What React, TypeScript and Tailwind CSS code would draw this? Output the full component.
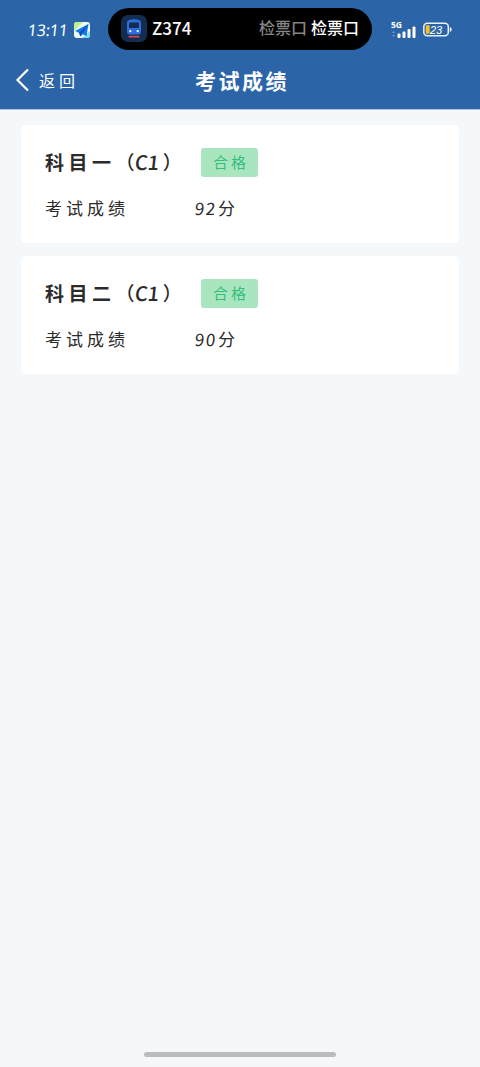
import React from "react";

const results = [
  { subject: "科目一", type: "C1", score: "92", status: "合格" },
  { subject: "科目二", type: "C1", score: "90", status: "合格" },
];

const StatusBar = () => (
  <div className="flex h-[57px] items-center pl-[28px]">
    <div className="w-[46px] -skew-x-6 pt-[2px] font-['Noto_Sans'] text-[16px] leading-5 tracking-[-0.2px]">13:11</div>
    <svg className="mt-[3px] h-4 w-4" viewBox="0 0 16 16">
      <rect width="16" height="16" rx="3" fill="#eef8f4" />
      <path d="M3 0h6L0 9V3a3 3 0 0 1 3-3Z" fill="#bdf08c" />
      <path d="M8 16l8-7v4a3 3 0 0 1-3 3Z" fill="#7fdcf5" />
      <path d="M14.5 2 1 9l4 1.8L6.5 14.5l2-2.2 4 1.7Z" fill="#1478ee" />
      <path d="M14.5 2 5 10.8l1.500 3.700Z" fill="#0755bd" />
    </svg>
    <div className="ml-[18px] flex h-[42px] w-[264px] items-center rounded-full bg-black px-[13px]">
      <svg className="h-[27px] w-[26px]" viewBox="0 0 26 27">
        <rect width="26" height="27" rx="7" fill="#122d4e" />
        <path d="M6 8c0-3 3-3.700 7-3.700s7 .7 7 3.700v9a2.500 2.500 0 0 1-2.500 2.500h-9A2.500 2.500 0 0 1 6 17Z" fill="#2d6de0" />
        <rect x="8" y="7.5" width="10" height="5.5" rx="1" fill="#122d4e" />
        <circle cx="9.3" cy="16.2" r="1.1" fill="#fff" />
        <circle cx="16.7" cy="16.2" r="1.1" fill="#fff" />
        <rect x="7.5" y="20.8" width="11" height="1.6" rx="0.6" fill="#e24550" />
      </svg>
      <span className="ml-[5px] -mt-[2px] text-[17px] font-medium">Z374</span>
      <div className="-mt-[3px] ml-auto flex gap-[4px] text-[16px] font-medium">
        <span className="text-[#858585]">检票口</span>
        <span>检票口</span>
      </div>
    </div>
    <svg className="mt-[1px] ml-[18px] h-5 w-[27px]" viewBox="0 0 27 20">
      <text x="1" y="8.5" fill="#fff" fontSize="8.5" fontWeight="700" fontFamily="Noto Sans">5G</text>
      <path d="M3.500 12l1.600 2H1.900ZM3.500 18l1.600-2H1.900Z" fill="#6d96cb" />
      <rect x="7.5" y="14.5" width="3" height="4.5" rx="1" fill="#fff" />
      <rect x="12.5" y="12.5" width="3" height="6.5" rx="1" fill="#fff" />
      <rect x="17.5" y="10" width="3" height="9" rx="1" fill="#fff" />
      <rect x="22.5" y="7.5" width="3" height="11.5" rx="1" fill="#fff" />
    </svg>
    <svg className="mt-[2px] ml-[6px] h-[15px] w-[30px]" viewBox="0 0 30 15">
      <rect x="0.8" y="1.3" width="24.5" height="12.4" rx="3.5" fill="none" stroke="#e9f1fb" strokeWidth="1.5" />
      <rect x="2.7" y="3.2" width="4" height="8.6" rx="1" fill="#fabd22" />
      <path d="M27 5.500c2 .5 2 3.500 0 4Z" fill="#e9f1fb" stroke="#e9f1fb" strokeWidth="0.5" />
      <text x="7" y="11.5" fill="#fff" fontSize="11" fontStyle="italic" fontFamily="Liberation Sans">23</text>
    </svg>
  </div>
);

const App = () => {
  return (
    <div className="flex h-[1067px] w-[480px] flex-col bg-[#f4f8fa] font-['Noto_Sans_CJK_SC',sans-serif] text-[#2b2b2b]">
      <header className="h-[110px] border-b border-[#a9c4e6] bg-[#2b65a8] text-white">
        <StatusBar />
        <div className="grid h-[46px] grid-cols-[195px_1fr] items-center">
          <div className="flex items-center pl-[15px]">
            <svg className="h-[24px] w-[15px]" viewBox="0 0 15 24" fill="none" stroke="#fff" strokeWidth="2.2">
              <path d="M13 1.500 2.500 12 13 22.500" />
            </svg>
            <span className="ml-[9px] text-[16px] leading-6 tracking-[4px]">返回</span>
          </div>
          <h1 className="text-[21px] leading-7 font-bold tracking-[2.5px]">考试成绩</h1>
        </div>
      </header>

      <main className="flex flex-col gap-[13px] px-[21px] pt-[15px]">
        {results.map((item) => (
          <section key={item.subject} className="h-[118px] rounded-[5px] bg-white pt-[22px] pl-6">
            <div className="flex h-[30px] items-center">
              <h2 className="flex w-[156px] items-center text-[19px] leading-7 font-bold whitespace-nowrap">
                <span className="tracking-[4.5px]">{item.subject}</span>
                <span className="w-[19px] font-medium">（</span>
                <span className="-skew-x-6 text-[20px] font-medium">{item.type}</span>
                <span className="ml-[4px] font-medium">）</span>
              </h2>
              <span className="flex h-[29px] w-[57px] shrink-0 items-center justify-center rounded-[3px] bg-[#a9e6c0] pl-[3px] text-[15px] tracking-[3px] text-[#35bd7e]">
                {item.status}
              </span>
            </div>
            <div className="mt-[17px] flex h-7 items-center text-[17px] leading-7">
              <span className="w-[150px] tracking-[4px]">考试成绩</span>
              <span className="-skew-x-6 text-[17px] tracking-[1.5px]">{item.score}</span>
              <span className="ml-px">分</span>
            </div>
          </section>
        ))}
      </main>

      <div className="mx-auto mt-auto mb-[10px] h-[5px] w-[192px] rounded-full bg-[#b9bdbe]" />
    </div>
  );
};

export default App;
